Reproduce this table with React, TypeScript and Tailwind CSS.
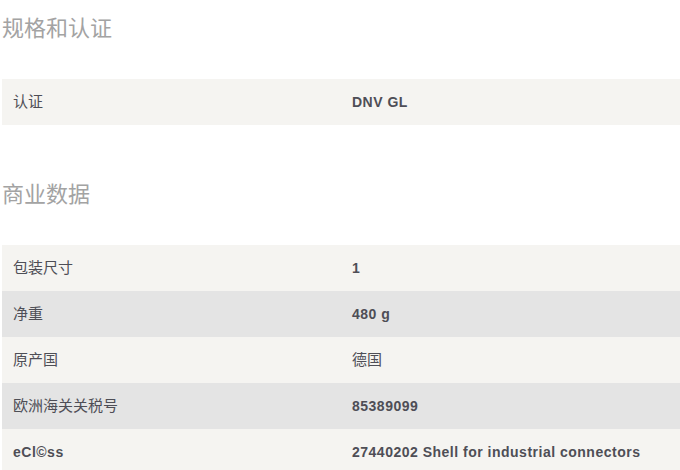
const cert = [{ label: '认证', value: 'DNV GL' }]

const commercial = [
  { label: '包装尺寸', value: '1' },
  { label: '净重', value: '480 g' },
  { label: '原产国', value: '德国', cjk: true },
  { label: '欧洲海关关税号', value: '85389099' },
  { label: 'eCl©ss', value: '27440202 Shell for industrial connectors', boldLabel: true },
]

type Row = { label: string; value: string; cjk?: boolean; boldLabel?: boolean }

function SpecTable({ rows }: { rows: Row[] }) {
  return (
    <div>
      {rows.map((row, i) => (
        <div
          key={row.label}
          className={`flex h-[46px] items-center text-[#4e4e56] ${i % 2 === 0 ? 'bg-[#f5f4f1]' : 'bg-[#e4e4e4]'}`}
        >
          <div className={`w-[350px] pl-[11px] ${row.boldLabel ? 'text-[14px] font-bold tracking-[0.5px]' : 'text-[15px]'}`}>
            {row.label}
          </div>
          <div className={`flex-1 ${row.cjk ? 'text-[15px]' : 'text-[14px] font-bold tracking-[0.5px]'}`}>{row.value}</div>
        </div>
      ))}
    </div>
  )
}

export default function App() {
  return (
    <div className="h-[470px] overflow-hidden bg-white pl-[2px] font-['Liberation_Sans','Noto_Sans_CJK_SC',sans-serif]">
      <h2 className="pt-[13px] text-[22px] leading-[32px] text-[#a3a3a3]">规格和认证</h2>
      <div className="mt-[34px]">
        <SpecTable rows={cert} />
      </div>
      <h2 className="mt-[54px] text-[22px] leading-[32px] text-[#a3a3a3]">商业数据</h2>
      <div className="mt-[34px]">
        <SpecTable rows={commercial} />
      </div>
    </div>
  )
}
